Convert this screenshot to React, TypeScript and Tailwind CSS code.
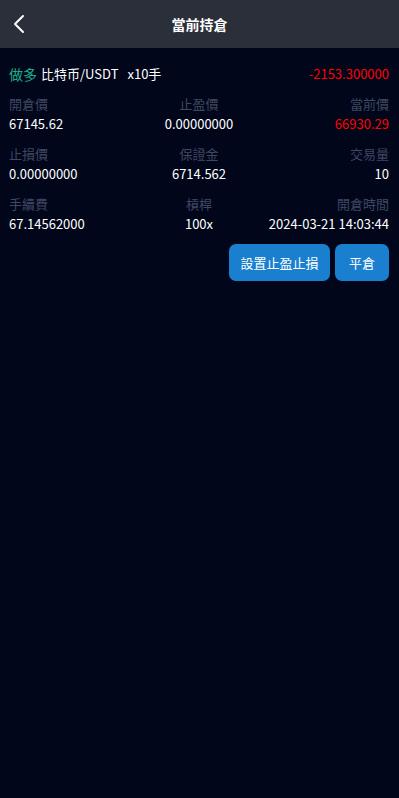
import React from "react";

const font = { fontFamily: '"Noto Sans CJK TC", "Noto Sans CJK SC", "Liberation Sans", sans-serif' };

function Cell({ label, value, align, red }: { label: string; value: string; align: "left" | "center" | "right"; red?: boolean }) {
  const a = align === "left" ? "text-left" : align === "center" ? "text-center" : "text-right";
  return (
    <div className={`flex flex-col ${a}`}>
      <div className="text-[13px] leading-[20px] text-[#3f4863]">{label}</div>
      <div className={`text-[13px] leading-[20px] ${red ? "text-[#ff0000]" : "text-white"}`}>{value}</div>
    </div>
  );
}

export default function App() {
  const rows = [
    [
      { label: "開倉價", value: "67145.62" },
      { label: "止盈價", value: "0.00000000" },
      { label: "當前價", value: "66930.29", red: true },
    ],
    [
      { label: "止損價", value: "0.00000000" },
      { label: "保證金", value: "6714.562" },
      { label: "交易量", value: "10" },
    ],
    [
      { label: "手續費", value: "67.14562000" },
      { label: "槓桿", value: "100x" },
      { label: "開倉時間", value: "2024-03-21 14:03:44" },
    ],
  ];
  return (
    <div style={font} className="min-h-[798px] w-full bg-[#01061a]">
      <div className="relative flex h-[48px] items-center justify-center bg-[#2b2f3a]">
        <div className="absolute left-[12px] top-[14px]">
          <svg width="14" height="20" viewBox="0 0 14 20" fill="none">
            <path d="M11 2 L3 10 L11 18" stroke="white" strokeWidth="2" strokeLinecap="round" strokeLinejoin="round" />
          </svg>
        </div>
        <div className="text-[14px] font-bold text-white">當前持倉</div>
      </div>
      <div className="px-[9px] pr-[10px]">
        <div className="flex items-center justify-between pt-[16px] pb-[10px] leading-[20px]">
          <div className="flex items-center text-[13px]">
            <span className="text-[14px] text-[#1bb08a]">做多</span>
            <span className="ml-[4px] text-white">比特币/USDT</span>
            <span className="ml-[9px] text-white">x10手</span>
          </div>
          <div className="text-[13px] text-[#ff0000]">-2153.300000</div>
        </div>
        <div className="flex flex-col gap-[10px]">
          {rows.map((r, i) => (
            <div key={i} className="grid grid-cols-3">
              <Cell label={r[0].label} value={r[0].value} align="left" red={(r[0] as any).red} />
              <Cell label={r[1].label} value={r[1].value} align="center" red={(r[1] as any).red} />
              <Cell label={r[2].label} value={r[2].value} align="right" red={(r[2] as any).red} />
            </div>
          ))}
        </div>
        <div className="mt-[10px] flex justify-end gap-[5px]">
          <button className="h-[37px] w-[101px] rounded-[7px] bg-[#1b7fd0] text-[13px] text-white">設置止盈止損</button>
          <button className="h-[37px] w-[54px] rounded-[7px] bg-[#1b7fd0] text-[13px] text-white">平倉</button>
        </div>
      </div>
    </div>
  );
}
